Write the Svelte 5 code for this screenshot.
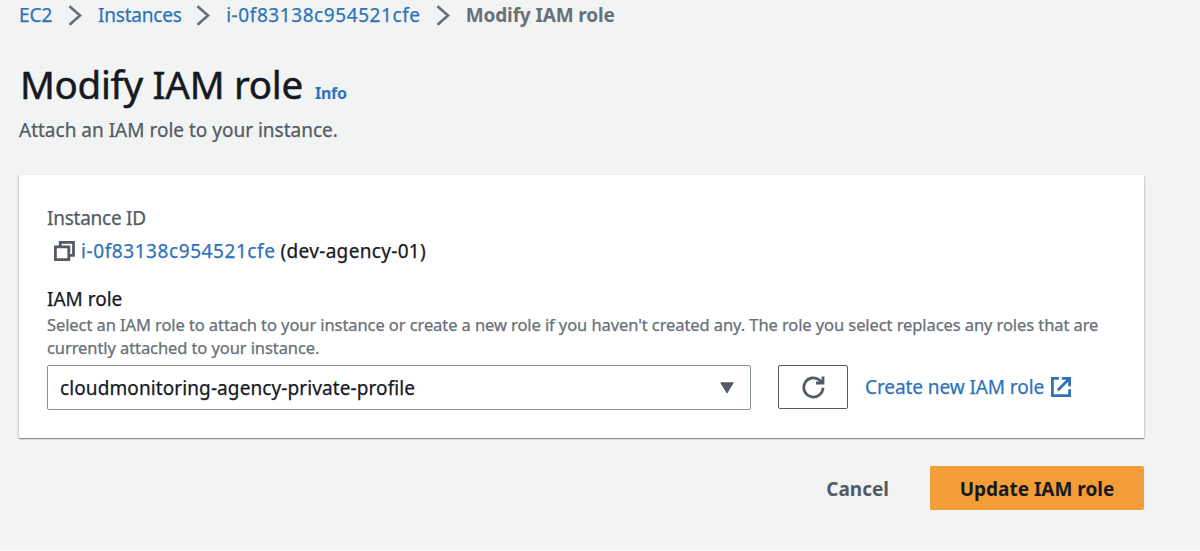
<script>
  const crumbs = ['EC2', 'Instances', 'i-0f83138c954521cfe'];
</script>

<div class="page">
  <nav class="crumbs">
    {#each crumbs as crumb, i}
      <a class="crumb{i}" href="#top">{crumb}</a>
      <svg class="chev" width="14" height="21" viewBox="0 0 14 21"><path d="M1.5 1.2 L12 10.5 L1.5 19.8" /></svg>
    {/each}
    <span class="current">Modify IAM role</span>
  </nav>

  <header>
    <div class="title"><h1>Modify IAM role</h1><a class="info" href="#info">Info</a></div>
    <p>Attach an IAM role to your instance.</p>
  </header>

  <section class="card">
    <div class="label">Instance ID</div>
    <div class="instance">
      <svg class="copy" width="21" height="20" viewBox="0 0 21 20"><path d="M6.2 5V1.4H19.5V14.4H15.5M1.4 5.8H14.8V18.6H1.4Z" /></svg>
      <a class="id" href="#instance">i-0f83138c954521cfe</a>
      <span class="name">(dev-agency-01)</span>
    </div>
    <div class="field">IAM role</div>
    <div class="desc">Select an IAM role to attach to your instance or create a new role if you haven't created any. The role you select replaces any roles that are<br /><span class="second">currently attached to your instance.</span></div>
    <div class="controls">
      <button class="select">
        <span>cloudmonitoring-agency-private-profile</span>
        <svg width="14" height="12" viewBox="0 0 14 12"><path d="M0.8 0.8H13.2L7 11Z" fill="#545b64" stroke="#545b64" stroke-linejoin="round" /></svg>
      </button>
      <button class="refresh" aria-label="Refresh">
        <svg width="24" height="24" viewBox="0 0 24 24"><path d="M22 12.8A9.6 9.6 0 1 1 18.8 5.3L20.5 7M22 1.6V8H15" /></svg>
      </button>
      <a class="create" href="#create">
        <span>Create new IAM role</span>
        <svg width="20" height="20" viewBox="0 0 20 20"><path d="M7.8 1.4H1.4V18.6H18.6V12.2M10.8 1.4H18.6V9.2M18.2 1.8L6.8 13.2" /></svg>
      </a>
    </div>
  </section>

  <footer>
    <button class="cancel">Cancel</button>
    <button class="primary">Update IAM role</button>
  </footer>
</div>

<style>
  :global(body) { margin: 0; overflow: hidden; }
  * { box-sizing: border-box; }
  .page { height: 551px; background: #f2f3f3; border-bottom: 1px solid #fff; padding: 5px 56px 0 19px; font: 19px/24px "Noto Sans", sans-serif; color: #16191f; white-space: nowrap; overflow: hidden; -webkit-text-stroke: 0.25px currentColor; }
  a { color: #2e73b8; text-decoration: none; }
  svg { display: block; fill: none; flex: none; }
  button { font: inherit; color: inherit; padding: 0; letter-spacing: inherit; }
  .crumbs { display: flex; align-items: center; height: 20px; }
  .crumb1 { letter-spacing: -0.2px; }
  .crumb2, .id { letter-spacing: 0.58px; }
  .chev { margin: 0 16px 0 15.5px; stroke: #687078; stroke-width: 2.7; }
  .crumb1 + .chev { margin-left: 14.5px; }
  .crumb2 + .chev { margin-left: 15px; }
  .current { font-weight: 700; color: #687078; letter-spacing: -0.12px; -webkit-text-stroke: 0; }
  .title { display: flex; align-items: baseline; margin-top: 36px; height: 46px; }
  h1 { margin: 0 0 0 1px; font-size: 38.5px; line-height: 46px; font-weight: 400; letter-spacing: -0.3px; -webkit-text-stroke: 0.5px currentColor; }
  .info { font-size: 16px; font-weight: 700; margin-left: 12px; letter-spacing: -0.2px; -webkit-text-stroke: 0; }
  p { margin: 11px 0 0; color: #545b64; }
  .card { height: 263px; margin-top: 33px; padding: 31px 28px 0; background: #fff; border-radius: 1px; box-shadow: 0 1px 1px rgba(0, 28, 36, 0.32), 1px 1px 2px rgba(0, 28, 36, 0.15), -1px 1px 2px rgba(0, 28, 36, 0.15); }
  .label { color: #545b64; letter-spacing: -0.25px; }
  .instance { display: flex; align-items: center; margin-top: 9px; height: 24px; }
  .copy { stroke: #545b64; stroke-width: 2.8; margin: 0 6px 0 7px; }
  .name { margin-left: 5px; letter-spacing: 0.33px; }
  .field { margin-top: 24px; }
  .desc { font-size: 16.5px; line-height: 23px; letter-spacing: -0.087px; color: #687078; margin-top: 2px; height: 47px; }
  .controls { display: flex; margin-top: 5px; align-items: flex-start; }
  .select { width: 704px; height: 45px; border: 1px solid #879596; border-radius: 2px; background: #fff; display: flex; align-items: center; justify-content: space-between; padding: 0 16px 0 12px; letter-spacing: 0.1px; }
  .refresh { width: 70px; height: 44px; margin-left: 27px; border: 1px solid #545b64; border-radius: 2px; background: #fff; display: grid; place-items: center; }
  .refresh svg { stroke: #545b64; stroke-width: 2.8; }
  .create { display: flex; align-items: center; height: 44px; margin-left: 17px; letter-spacing: -0.08px; }
  .create svg { stroke: #2e73b8; stroke-width: 2.8; margin-left: 7px; }
  footer { display: flex; justify-content: flex-end; margin-top: 28px; -webkit-text-stroke: 0; }
  footer button { height: 44px; border: 0; font-weight: 700; padding-top: 1px; }
  .cancel { background: none; color: #545b64; margin-right: 41px; }
  .primary { width: 214px; background: #f29d38; border-radius: 2px; }
</style>
